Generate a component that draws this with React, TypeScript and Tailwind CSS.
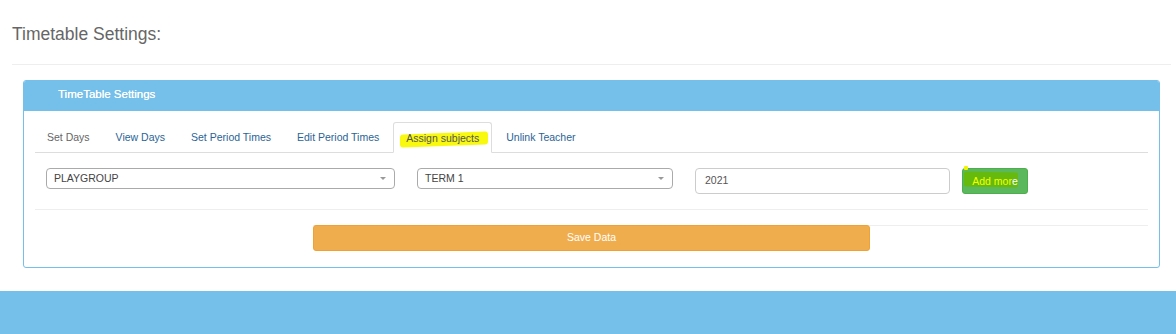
import React from 'react';

const tabs = [
  { label: 'Set Days', muted: true },
  { label: 'View Days' },
  { label: 'Set Period Times' },
  { label: 'Edit Period Times' },
  { label: 'Assign subjects', active: true },
  { label: 'Unlink Teacher' },
];

const Caret = () => (
  <span className="absolute right-[8px] top-[8px] w-0 h-0 border-l-[3.5px] border-r-[3.5px] border-t-[3.5px] border-l-transparent border-r-transparent border-t-[#999]" />
);

export default function App() {
  return (
    <div className="w-full h-[334px] bg-white flex flex-col font-['Liberation_Sans',Arial,sans-serif] overflow-hidden">
      <div className="h-[64px] pl-[12px] flex items-center">
        <h1 className="text-[17.5px] text-[#666] leading-none pt-[6px]">Timetable Settings:</h1>
      </div>
      <div className="ml-[12px] mr-[5px] border-t border-[#eee]" />

      <div className="mt-[15px] ml-[23px] w-[1137px] border border-solid border-[#74c0ea] rounded-[3px] overflow-hidden">
        <div className="h-[30px] bg-[#74c0ea] pl-[34px] flex items-center pb-[2px]">
          <span className="text-white text-[11.5px] [text-shadow:0_0_0.4px_#fff]">TimeTable Settings</span>
        </div>

        <div className="px-[11px] pt-[11px] pb-[16px]">
          {/* tabs */}
          <div className="flex border-b border-[#ddd] h-[31px] items-end">
            {tabs.map(t => (
              <div
                key={t.label}
                className={
                  t.active
                    ? 'relative h-[31px] px-[12px] mr-[2px] mb-[-1px] flex items-center border border-[#ddd] border-b-white bg-white rounded-t-[3px] text-[#555]'
                    : 'relative h-[30px] px-[12px] mr-[2px] flex items-center ' + (t.muted ? 'text-[#666]' : 'text-[#2a6496]')
                }
              >
                {t.active && (
                  <span className="absolute left-[6px] right-[3px] top-[10px] h-[13px] bg-[#f9f90f] -skew-y-2 rounded-[3px]" />
                )}
                <span className="relative text-[10.5px] leading-none pt-[1px]">{t.label}</span>
              </div>
            ))}
          </div>

          {/* form row */}
          <div className="flex items-start pt-[15px] pb-[15px] border-b border-[#eee]">
            <div className="relative ml-[11px] w-[349px] h-[21px] border border-[#aaa] rounded-[4px] flex items-center pl-[7px]">
              <span className="text-[10.5px] text-[#444]">PLAYGROUP</span>
              <Caret />
            </div>
            <div className="relative ml-[22px] w-[256px] h-[21px] border border-[#aaa] rounded-[4px] flex items-center pl-[7px]">
              <span className="text-[10.5px] text-[#444]">TERM 1</span>
              <Caret />
            </div>
            <div className="ml-[22px] w-[255px] h-[26px] border border-[#ccc] rounded-[4px] flex items-center pl-[9px]">
              <span className="text-[10.5px] text-[#555]">2021</span>
            </div>
            <div className="relative ml-[12px] w-[66px] h-[26px] bg-[#5cb85c] border border-[#4cae4c] rounded-[3px] flex items-center justify-center">
              <span className="absolute left-[1px] top-[-3px] w-[4px] h-[4px] bg-[#f4f400] rounded-[1px]" />
              <span className="absolute left-[1px] top-[3px] w-[54px] h-[15px] bg-[#66ba0e] rounded-[2px] skew-y-1" />
              <span className="relative text-[10.5px] text-[#f2ff00] leading-none">
                Add mor<span className="text-white">e</span>
              </span>
            </div>
          </div>

          {/* save row */}
          <div className="mt-[15px] ml-[278px] border-t border-[#eee]">
            <button className="-mt-px w-[557px] h-[26px] bg-[#f0ad4e] border border-[#eea236] rounded-[3px] text-white text-[10.5px] flex items-center justify-center">
              Save Data
            </button>
          </div>
        </div>
      </div>

      <div className="mt-[23px] flex-1 bg-[#74c0ea]" />
    </div>
  );
}
